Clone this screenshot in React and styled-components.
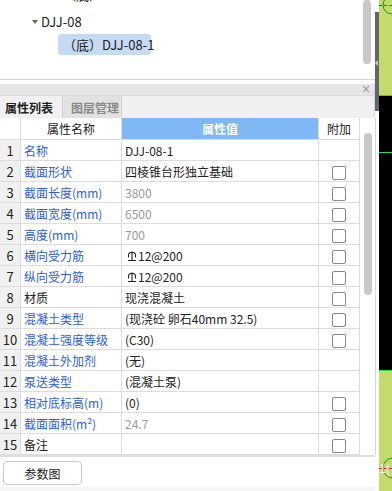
import React from 'react';
import styled, { createGlobalStyle } from 'styled-components';

const GlobalStyle = createGlobalStyle`
  html, body { margin: 0; padding: 0; background: #fff; }
  body { font-family: "Noto Sans CJK SC", "Microsoft YaHei", sans-serif; font-size: 12px; color: #222; }
`;

const rows = [
  { name: '名称', value: 'DJJ-08-1', check: false },
  { name: '截面形状', value: '四棱锥台形独立基础', check: true },
  { name: '截面长度(mm)', value: '3800', muted: true, check: true },
  { name: '截面宽度(mm)', value: '6500', muted: true, check: true },
  { name: '高度(mm)', value: '700', muted: true, check: true },
  { name: '横向受力筋', value: '12@200', rebar: true, check: true },
  { name: '纵向受力筋', value: '12@200', rebar: true, check: true },
  { name: '材质', value: '现浇混凝土', plain: true, check: true },
  { name: '混凝土类型', value: '(现浇砼 卵石40mm 32.5)', check: true },
  { name: '混凝土强度等级', value: '(C30)', check: true },
  { name: '混凝土外加剂', value: '(无)', check: false },
  { name: '泵送类型', value: '(混凝土泵)', check: false },
  { name: '相对底标高(m)', value: '(0)', check: true },
  { name: '截面面积(m²)', value: '24.7', muted: true, check: true },
  { name: '备注', value: '', plain: true, check: true },
];

const Rebar = () => (
  <RebarIcon width="10" height="11" viewBox="0 0 10 11">
    <path d="M5 0.5 V9.5 M1 9.5 H9 M1.5 6.5 V4.5 A3.5 3.2 0 0 1 8.5 4.5 V6.5" fill="none" stroke="#222" strokeWidth="1.1" />
  </RebarIcon>
);

const App = () => (
  <>
    <GlobalStyle />
    <Screen>
      <Panel>
        <TreeArea>
          <TreeList>
            <TreeItem $indent={63} $top>（底）DJJ-10-1</TreeItem>
            <TreeItem $indent={32}>
              <Caret />
              DJJ-08
            </TreeItem>
            <Selected>（底）DJJ-08-1</Selected>
          </TreeList>
          <ScrollTrack>
            <Thumb $top={0} $height={64} />
          </ScrollTrack>
        </TreeArea>
        <Gap />
        <HeaderBar>
          <Close>×</Close>
        </HeaderBar>
        <Tabs>
          <Tab $active>属性列表</Tab>
          <Tab>图层管理</Tab>
        </Tabs>
        <TableArea>
          <Grid>
            <thead>
              <tr>
                <HeadCell $w={20} />
                <HeadCell $w={100}>属性名称</HeadCell>
                <HeadCell $w={196} $blue>属性值</HeadCell>
                <HeadCell $w={40}>附加</HeadCell>
              </tr>
            </thead>
            <tbody>
              {rows.map((r, i) => (
                <tr key={i}>
                  <NumCell>{i + 1}</NumCell>
                  <NameCell $plain={r.plain}>{r.name}</NameCell>
                  <ValueCell $muted={r.muted}>
                    {r.rebar && <Rebar />}
                    {r.value}
                  </ValueCell>
                  <CheckCell>{r.check && <Box />}</CheckCell>
                </tr>
              ))}
            </tbody>
          </Grid>
          <ScrollTrack $table>
            <Thumb $top={15} $height={162} />
          </ScrollTrack>
        </TableArea>
        <Footer>
          <Button>参数图</Button>
        </Footer>
      </Panel>
      <Splitter>
        <Handle />
      </Splitter>
      <Canvas>
        <svg width="13" height="491" viewBox="0 0 13 491">
          <rect x="0" y="0" width="13" height="95" fill="#c3da6c" />
          <rect x="0" y="95" width="13" height="276" fill="#000" />
          <rect x="0" y="371" width="13" height="120" fill="#c3da6c" />
          <line x1="0" y1="95.5" x2="13" y2="95.5" stroke="#22e040" />
          <line x1="0" y1="152.5" x2="13" y2="152.5" stroke="#22e040" />
          <line x1="0" y1="370.5" x2="13" y2="370.5" stroke="#22e040" />
          <line x1="0" y1="5.5" x2="13" y2="5.5" stroke="#e02020" strokeDasharray="3 2" />
          <circle cx="13" cy="5" r="9" fill="none" stroke="#2a8a2a" />
          <line x1="0" y1="468.5" x2="13" y2="468.5" stroke="#e02020" strokeDasharray="3 2" />
          <circle cx="14" cy="468" r="10" fill="none" stroke="#2a8a2a" />
          <text x="0" y="473" fontSize="12" fill="#f4f4f4" fontFamily="Liberation Sans, sans-serif">1(</text>
        </svg>
      </Canvas>
    </Screen>
  </>
);

const Screen = styled.div`
  display: flex;
  width: 392px;
  height: 491px;
  overflow: hidden;
`;

const Panel = styled.div`
  display: flex;
  flex-direction: column;
  width: 375px;
  flex: none;
  background: #fff;
`;

const TreeArea = styled.div`
  display: flex;
  height: 79px;
  border-bottom: 1px solid #d6d6d6;
`;

const TreeList = styled.div`
  flex: 1;
  overflow: hidden;
`;

const TreeItem = styled.div`
  display: flex;
  align-items: center;
  height: 21px;
  padding-left: ${(p) => p.$indent}px;
  margin-top: ${(p) => (p.$top ? '-16px' : '0')};
  margin-bottom: ${(p) => (p.$top ? '6px' : '0')};
  font-size: 13px;
  color: #222;
  white-space: nowrap;
`;

const Caret = styled.span`
  width: 0;
  height: 0;
  border-left: 3px solid transparent;
  border-right: 3px solid transparent;
  border-top: 4px solid #666;
  margin-right: 3px;
`;

const Selected = styled.div`
  display: flex;
  align-items: center;
  width: 88px;
  height: 21px;
  margin: 2px 0 0 58px;
  padding-left: 5px;
  font-size: 13px;
  background: #c4dbf3;
  border-radius: 3px;
  white-space: nowrap;
`;

const ScrollTrack = styled.div`
  position: relative;
  width: ${(p) => (p.$table ? '15px' : '12px')};
  flex: none;
  margin-right: ${(p) => (p.$table ? '0' : '4px')};
  border-right: ${(p) => (p.$table ? '1px solid #d6d6d6' : 'none')};
  background: #fff;
`;

const Thumb = styled.div`
  position: absolute;
  left: 4px;
  top: ${(p) => p.$top}px;
  width: 8px;
  height: ${(p) => p.$height}px;
  background: #c8c8c8;
  border-radius: 4px;
`;

const Gap = styled.div`
  height: 4px;
`;

const HeaderBar = styled.div`
  display: flex;
  justify-content: flex-end;
  align-items: center;
  height: 11px;
  background: #e6e6e6;
  border-right: 1px solid #d6d6d6;
`;

const Close = styled.span`
  font-family: "DejaVu Sans", sans-serif;
  font-size: 12px;
  line-height: 11px;
  color: #9a9a9a;
  margin-right: 3px;
`;

const Tabs = styled.div`
  display: flex;
  height: 22px;
  background: #f0f0f0;
  border-top: 1px solid #dcdcdc;
  border-right: 1px solid #d6d6d6;
`;

const Tab = styled.div`
  display: flex;
  align-items: center;
  box-sizing: border-box;
  width: ${(p) => (p.$active ? '62px' : '60px')};
  padding-left: ${(p) => (p.$active ? '5px' : '8px')};
  font-size: 12px;
  font-weight: bold;
  white-space: nowrap;
  color: ${(p) => (p.$active ? '#222' : '#8a8a8a')};
  background: ${(p) => (p.$active ? '#f0f0f0' : '#e2e2e2')};
  border-left: ${(p) => (p.$active ? 'none' : '1px solid #d0d0d0')};
  border-right: ${(p) => (p.$active ? 'none' : '1px solid #d0d0d0')};
`;

const TableArea = styled.div`
  display: flex;
  height: 337px;
  border-bottom: 2px solid #dedede;
`;

const Grid = styled.table`
  border-collapse: collapse;
  table-layout: fixed;
  width: 359px;
  flex: none;
  td, th {
    border: 1px solid #dcdcdc;
    height: 20px;
    padding: 0;
    white-space: nowrap;
    overflow: hidden;
    font-size: 12px;
  }
  tr:first-child th { border-top: none; }
  tr td:first-child, tr th:first-child { border-left: none; }
`;

const HeadCell = styled.th`
  width: ${(p) => p.$w}px;
  text-align: center;
  background: ${(p) => (p.$blue ? '#7fb8f2' : '#fff')};
  color: ${(p) => (p.$blue ? '#fff' : '#222')};
  font-weight: ${(p) => (p.$blue ? 'bold' : 'normal')};
  && { height: 21px; }
`;

const NumCell = styled.td`
  background: #f0f0f0;
  text-align: center;
  color: #222;
  && { font-size: 13px; }
`;

const NameCell = styled.td`
  padding-left: 3px !important;
  color: ${(p) => (p.$plain ? '#222' : '#2c5de4')};
`;

const ValueCell = styled.td`
  padding-left: 3px !important;
  color: ${(p) => (p.$muted ? '#999' : '#222')};
`;

const RebarIcon = styled.svg`
  vertical-align: -1px;
  margin: 0 1px 0 2px;
`;

const CheckCell = styled.td`
  text-align: center;
  vertical-align: middle;
`;

const Box = styled.span`
  display: inline-block;
  vertical-align: middle;
  box-sizing: border-box;
  width: 14px;
  height: 14px;
  border: 1px solid #888;
  border-radius: 2px;
  background: #fff;
  margin-top: -1px;
`;

const Footer = styled.div`
  flex: 1;
  padding: 4px 0 0 3px;
  background: #fff;
  border-bottom: 4px solid #f6f6f6;
`;

const Button = styled.button`
  width: 79px;
  height: 24px;
  padding: 0;
  font-family: inherit;
  font-size: 12px;
  color: #222;
  background: #fff;
  border: 1px solid #c8c8c8;
  border-radius: 4px;
`;

const Splitter = styled.div`
  display: flex;
  width: 4px;
  flex: none;
  padding-top: 12px;
  background: #fff;
`;

const Handle = styled.div`
  position: relative;
  width: 4px;
  height: 99px;
  background: #5d6671;
  &::before {
    content: '';
    position: absolute;
    left: 0;
    top: 48px;
    border-top: 3px solid transparent;
    border-bottom: 3px solid transparent;
    border-right: 3px solid #c0c6cc;
  }
`;

const Canvas = styled.div`
  width: 13px;
  flex: none;
  line-height: 0;
`;

export default App;
